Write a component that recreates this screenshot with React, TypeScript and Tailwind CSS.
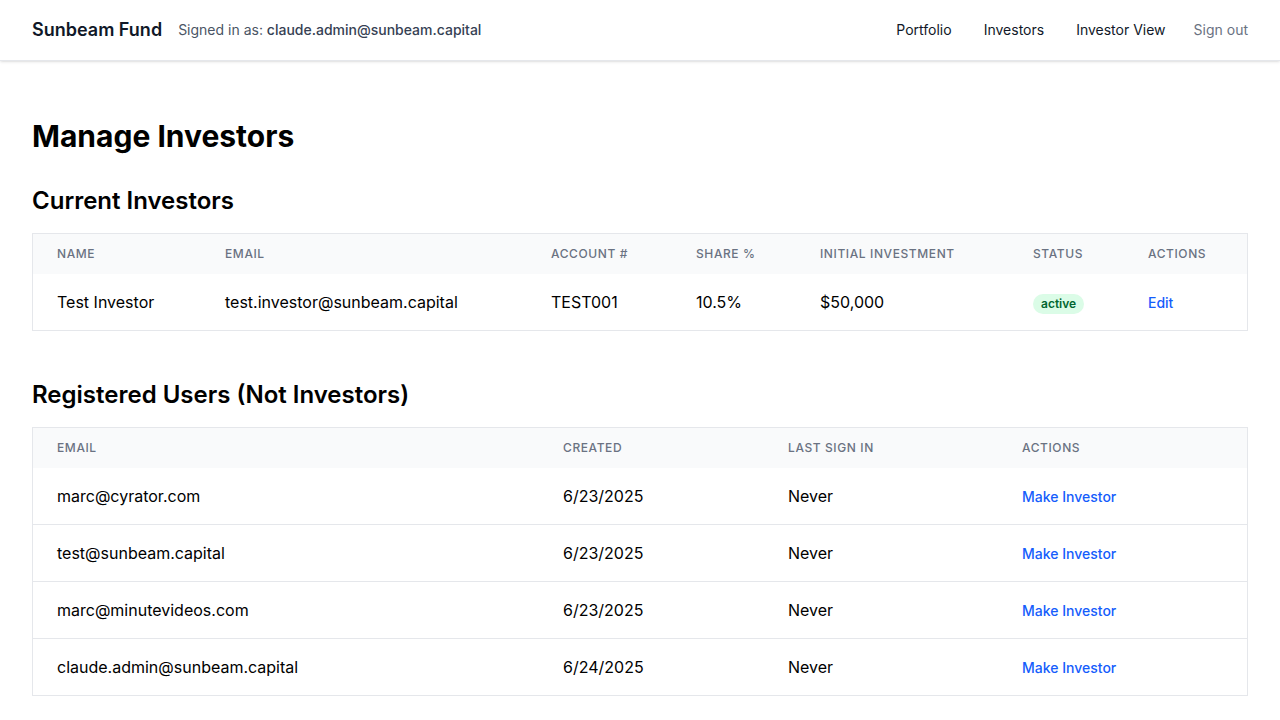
import React from 'react';

const investors = [
  { name: 'Test Investor', email: 'test.investor@sunbeam.capital', account: 'TEST001', share: '10.5%', initial: '$50,000', status: 'active' },
];

const users = [
  { email: 'marc@cyrator.com', created: '6/23/2025', last: 'Never' },
  { email: 'test@sunbeam.capital', created: '6/23/2025', last: 'Never' },
  { email: 'marc@minutevideos.com', created: '6/23/2025', last: 'Never' },
  { email: 'claude.admin@sunbeam.capital', created: '6/24/2025', last: 'Never' },
];

const th = "px-6 py-3 text-left text-xs font-medium text-gray-500 uppercase tracking-wider";
const td = "px-6 py-4 text-base text-black whitespace-nowrap";

export default function App() {
  return (
    <div className="min-h-screen bg-white font-['Inter',sans-serif] text-black">
      <header className="h-[61px] border-b border-gray-200 shadow-sm px-8 flex items-center justify-between">
        <div className="flex items-center gap-4">
          <span className="text-lg font-semibold text-gray-900">Sunbeam Fund</span>
          <span className="text-sm text-gray-600">
            Signed in as: <span className="font-medium text-gray-700">claude.admin@sunbeam.capital</span>
          </span>
        </div>
        <nav className="flex items-center text-sm">
          <div className="flex items-center gap-8">
            <a href="#" className="text-gray-900">Portfolio</a>
            <a href="#" className="text-gray-900">Investors</a>
            <a href="#" className="text-gray-900">Investor View</a>
          </div>
          <button className="ml-7 text-gray-500">Sign out</button>
        </nav>
      </header>

      <main className="px-8 pt-[57px] pb-8">
        <h1 className="text-3xl font-bold mb-[31px]">Manage Investors</h1>

        <h2 className="text-2xl font-semibold mb-4">Current Investors</h2>
        <div className="border border-gray-200 overflow-hidden">
          <table className="w-full table-fixed">
            <colgroup>
              <col className="w-[168px]" />
              <col className="w-[326px]" />
              <col className="w-[145px]" />
              <col className="w-[124px]" />
              <col className="w-[213px]" />
              <col className="w-[115px]" />
              <col />
            </colgroup>
            <thead className="bg-gray-50">
              <tr>
                <th className={th}>Name</th>
                <th className={th}>Email</th>
                <th className={th}>Account #</th>
                <th className={th}>Share %</th>
                <th className={th}>Initial Investment</th>
                <th className={th}>Status</th>
                <th className={th}>Actions</th>
              </tr>
            </thead>
            <tbody>
              {investors.map((inv) => (
                <tr key={inv.account}>
                  <td className={td}>{inv.name}</td>
                  <td className={td}>{inv.email}</td>
                  <td className={td}>{inv.account}</td>
                  <td className={td}>{inv.share}</td>
                  <td className={td}>{inv.initial}</td>
                  <td className={td}>
                    <span className="inline-flex px-2 text-xs font-semibold leading-5 rounded-full bg-green-100 text-green-800">
                      {inv.status}
                    </span>
                  </td>
                  <td className={td}>
                    <button className="text-sm font-medium text-blue-600">Edit</button>
                  </td>
                </tr>
              ))}
            </tbody>
          </table>
        </div>

        <h2 className="text-2xl font-semibold mt-12 mb-4">Registered Users (Not Investors)</h2>
        <div className="border border-gray-200 overflow-hidden">
          <table className="w-full table-fixed">
            <colgroup>
              <col className="w-[506px]" />
              <col className="w-[225px]" />
              <col className="w-[234px]" />
              <col />
            </colgroup>
            <thead className="bg-gray-50">
              <tr>
                <th className={th}>Email</th>
                <th className={th}>Created</th>
                <th className={th}>Last Sign In</th>
                <th className={th}>Actions</th>
              </tr>
            </thead>
            <tbody className="divide-y divide-gray-200">
              {users.map((u) => (
                <tr key={u.email}>
                  <td className={td}>{u.email}</td>
                  <td className={td}>{u.created}</td>
                  <td className={td}>{u.last}</td>
                  <td className={td}>
                    <button className="text-sm font-medium text-blue-600">Make Investor</button>
                  </td>
                </tr>
              ))}
            </tbody>
          </table>
        </div>
      </main>
    </div>
  );
}
